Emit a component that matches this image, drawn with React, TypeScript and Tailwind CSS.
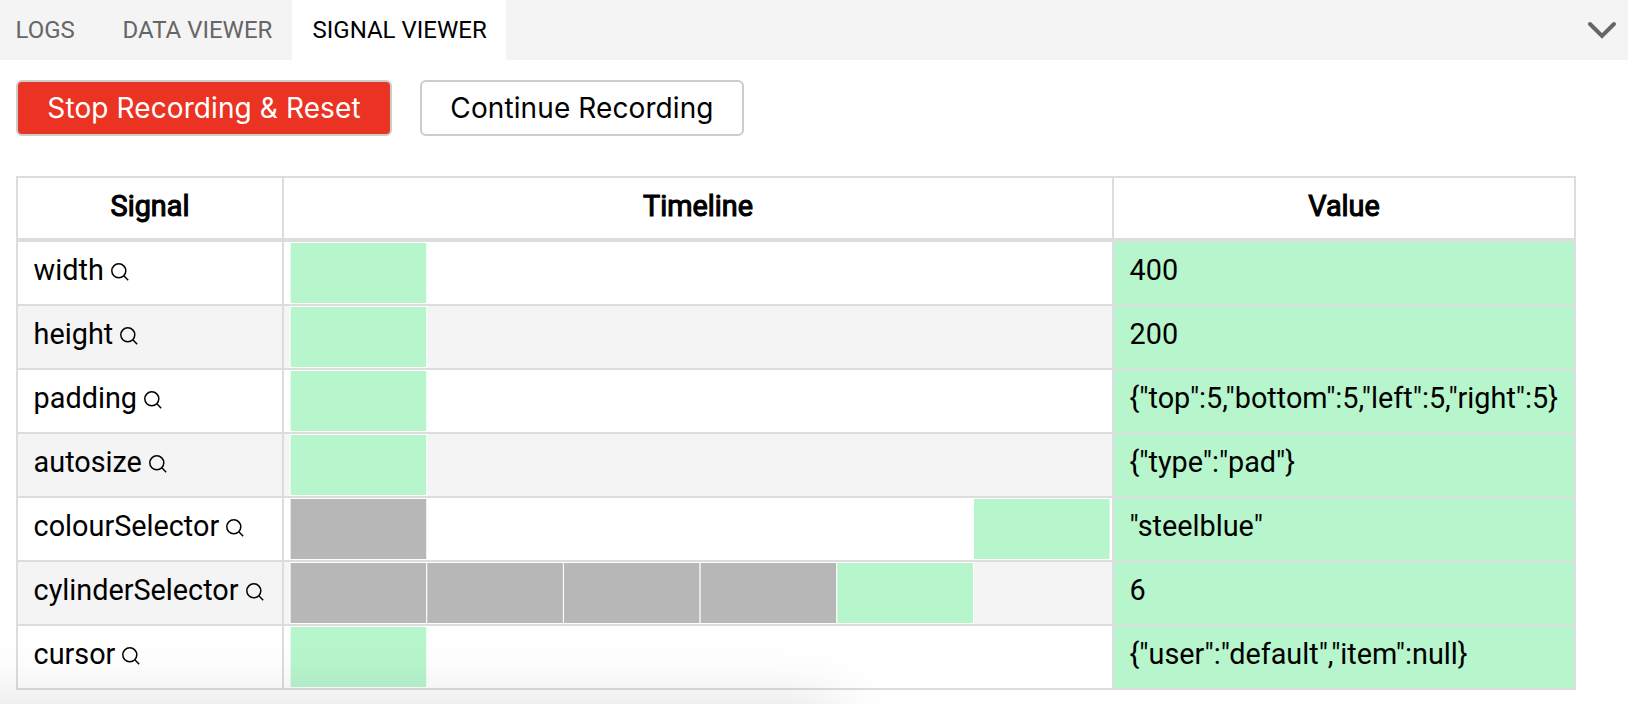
import React from "react";

type Segment = { start: number; state: "past" | "current" };
type Signal = { name: string; segments: Segment[]; value: string };

const SEGMENT = 820 / 6;

const signals: Signal[] = [
  { name: "width", segments: [{ start: 0, state: "current" }], value: "400" },
  { name: "height", segments: [{ start: 0, state: "current" }], value: "200" },
  { name: "padding", segments: [{ start: 0, state: "current" }], value: '{"top":5,"bottom":5,"left":5,"right":5}' },
  { name: "autosize", segments: [{ start: 0, state: "current" }], value: '{"type":"pad"}' },
  {
    name: "colourSelector",
    segments: [{ start: 0, state: "past" }, { start: 5, state: "current" }],
    value: '"steelblue"',
  },
  {
    name: "cylinderSelector",
    segments: [
      { start: 0, state: "past" },
      { start: 1, state: "past" },
      { start: 2, state: "past" },
      { start: 3, state: "past" },
      { start: 4, state: "current" },
    ],
    value: "6",
  },
  { name: "cursor", segments: [{ start: 0, state: "current" }], value: '{"user":"default","item":null}' },
];

function SearchIcon() {
  return (
    <svg className="ml-[7px] mt-[-3px] size-[18px] shrink-0" viewBox="0 0 18 18" fill="none" stroke="black" strokeWidth="1.5">
      <circle cx="7.8" cy="7.8" r="7" />
      <path d="M12.8 12.8L17.2 17.2" />
    </svg>
  );
}

function Timeline({ segments }: { segments: Segment[] }) {
  return (
    <svg className="ml-[6px] block overflow-visible" width="822" height="62">
      {segments.map((s) => (
        <rect
          key={s.start}
          x={0.1 + s.start * SEGMENT}
          y="0.5"
          width={SEGMENT}
          height="61"
          fill={s.state === "current" ? "#b7f5cd" : "#b7b7b7"}
          stroke="white"
          strokeWidth="1"
        />
      ))}
    </svg>
  );
}

export default function App() {
  return (
    <div className="relative h-[704px] w-full overflow-hidden bg-white font-[Roboto,sans-serif] text-black">
      <nav className="flex h-[60px] items-stretch bg-[#f4f4f4] text-[24px] leading-[60px] text-[#666]">
        <div className="w-[107px] pl-[15.5px]">LOGS</div>
        <div className="w-[185px] pl-[15.5px]">DATA VIEWER</div>
        <div className="w-[214px] bg-white pl-[20.5px] text-black">SIGNAL VIEWER</div>
        <svg className="mt-[20px] mr-[11px] ml-auto" width="30" height="20" fill="none" stroke="#666" strokeWidth="4" strokeLinecap="round">
          <path d="M3 4L15 16L27 4" />
        </svg>
      </nav>

      <div className="flex gap-[28px] px-4 pt-5 font-[Inter,sans-serif] text-[28px] leading-[52px] tracking-[0.1px]">
        <button className="h-[56px] w-[376px] rounded-[6px] border-2 border-[#ccc] bg-[#eb3323] text-white">
          Stop Recording &amp; Reset
        </button>
        <button className="h-[56px] w-[324px] rounded-[6px] border-2 border-[#ccc] bg-white">Continue Recording</button>
      </div>

      <div className="mt-10 ml-4 w-[1560px] border-x-2 border-t-2 border-[#ddd] text-[28.8px]">
        <div className="grid h-[64px] grid-cols-[266px_830px_460px] border-b-4 border-[#ddd] text-center leading-[56px] [-webkit-text-stroke:1.1px_black]">
          <div className="border-r-2 border-[#ddd]">Signal</div>
          <div className="border-r-2 border-[#ddd]">Timeline</div>
          <div>Value</div>
        </div>
        {signals.map((signal) => (
          <div
            key={signal.name}
            className="grid h-[64px] grid-cols-[266px_830px_460px] border-b-2 border-[#ddd] leading-[56px] odd:bg-[#f4f4f4]"
          >
            <div className="flex h-[62px] items-center border-r-2 border-[#ddd] pl-[15.6px]">
              <span className="-mt-1.5">{signal.name}</span>
              <SearchIcon />
            </div>
            <div className="border-r-2 border-[#ddd]">
              <Timeline segments={signal.segments} />
            </div>
            <div className="bg-[#b7f5cd] pl-[15.6px]">{signal.value}</div>
          </div>
        ))}
      </div>
      <div className="pointer-events-none absolute top-full -left-[100px] h-[200px] w-[940px] shadow-[0_0_60px_rgba(0,0,0,0.13)]" />
    </div>
  );
}
